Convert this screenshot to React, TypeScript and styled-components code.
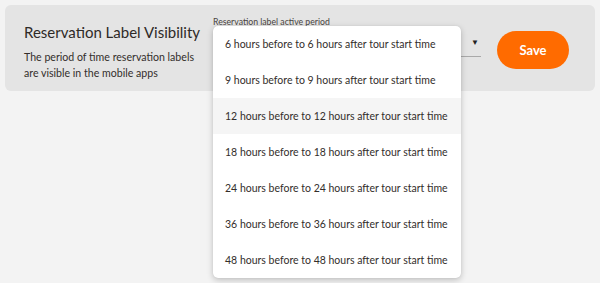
import styled, { createGlobalStyle } from "styled-components";

const Global = createGlobalStyle`
	html, body {
		margin: 0;
		padding: 0;
		background: #f3f3f3;
		font-family: Lato, "Noto Sans", sans-serif;
		color: #332e2b;
	}
`;

const Page = styled.div`
	width: 600px;
	height: 283px;
	padding: 5px;
	box-sizing: border-box;
`;

const Card = styled.section`
	display: flex;
	align-items: flex-start;
	height: 86px;
	box-sizing: border-box;
	padding: 0 0 0 19px;
	background: #e4e4e4;
	border-radius: 6px;
`;

const Info = styled.div`
	flex: 0 0 189px;
	padding-top: 17px;
	white-space: nowrap;
`;

const Title = styled.h2`
	margin: 0;
	font-size: 15px;
	font-weight: 400;
	line-height: 20px;
	color: #2e2a27;
`;

const Description = styled.p`
	margin: 7px 0 0;
	font-size: 10.6px;
	line-height: 16px;
	color: #332e2b;
`;

const Field = styled.div`
	position: relative;
	width: 268px;
	padding-top: 11px;
`;

const FieldLabel = styled.label`
	display: block;
	font-size: 8.7px;
	line-height: 12px;
	color: #4a4542;
`;

const SelectBox = styled.div`
	display: flex;
	justify-content: flex-end;
	align-items: center;
	height: 28px;
	padding-right: 2px;
	border-bottom: 1px solid #a9a9a9;
	font-size: 8px;
	color: #222;
`;

const Menu = styled.ul`
	position: absolute;
	top: 21px;
	left: 0;
	width: 248px;
	margin: 0;
	padding: 0;
	list-style: none;
	background: #fff;
	border-radius: 5px;
	box-shadow: 0 2px 6px rgba(0, 0, 0, 0.22), 0 0 1px rgba(0, 0, 0, 0.12);
	z-index: 2;
`;

const MenuItem = styled.li<{ $active?: boolean }>`
	display: flex;
	align-items: center;
	height: 36px;
	padding-left: 12px;
	font-size: 10.5px;
	color: #332e2b;
	white-space: nowrap;
	background: ${(p) => (p.$active ? "#f5f5f5" : "transparent")};
`;

const SaveButton = styled.button`
	margin: 26px 0 0 16px;
	width: 72px;
	height: 38px;
	border: none;
	border-radius: 19px;
	background: #ff6b00;
	color: #fff;
	font-family: Lato, "Noto Sans", sans-serif;
	font-size: 13px;
	font-weight: 700;
	cursor: pointer;
`;

const hours = [6, 9, 12, 18, 24, 36, 48];

export default function App() {
	return (
		<Page>
			<Global />
			<Card>
				<Info>
					<Title>Reservation Label Visibility</Title>
					<Description>
						The period of time reservation labels
						<br />
						are visible in the mobile apps
					</Description>
				</Info>
				<Field>
					<FieldLabel>Reservation label active period</FieldLabel>
					<SelectBox>▼</SelectBox>
					<Menu>
						{hours.map((h) => (
							<MenuItem key={h} $active={h === 12}>
								{h} hours before to {h} hours after tour start time
							</MenuItem>
						))}
					</Menu>
				</Field>
				<SaveButton>Save</SaveButton>
			</Card>
		</Page>
	);
}
